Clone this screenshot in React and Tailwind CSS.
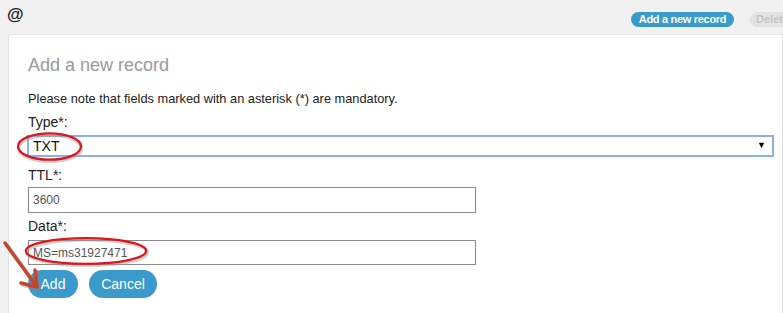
import React from 'react';

const Ellipse = ({ className }) => (
  <svg className={`absolute pointer-events-none ${className}`} viewBox="0 0 100 40" preserveAspectRatio="none">
    <ellipse cx="51" cy="22" rx="47" ry="16" fill="none" stroke="#999" strokeOpacity="0.45" strokeWidth="3.5" vectorEffect="non-scaling-stroke" />
    <ellipse cx="50" cy="20" rx="47" ry="16" fill="none" stroke="#e0141b" strokeWidth="2.3" vectorEffect="non-scaling-stroke" />
  </svg>
);

const Arrow = () => (
  <svg className="absolute left-0 top-[236px] w-[48px] h-[60px] pointer-events-none" viewBox="0 0 48 60">
    <g stroke="#888" strokeOpacity="0.4" strokeWidth="4" strokeLinecap="round" fill="none" transform="translate(2,2)">
      <path d="M5 7 L37 51" />
      <path d="M37 51 L35 34 M37 51 L21 47" />
    </g>
    <g stroke="#c4452b" strokeWidth="3.5" strokeLinecap="round" fill="none">
      <path d="M5 7 L37 51" />
      <path d="M37 51 L35 34 M37 51 L21 47" />
    </g>
  </svg>
);

export default function App() {
  return (
    <div className="w-[783px] h-[313px] overflow-hidden bg-[#f1f1f1] relative" style={{ fontFamily: '"Liberation Sans", Arial, sans-serif' }}>
      {/* top bar */}
      <div className="flex items-start justify-between h-[34px] pl-[7px]">
        <span className="text-[17px] leading-[18px] mt-[6px] text-[#222] font-semibold">@</span>
        <div className="flex items-start pt-[12px] gap-[16px] -mr-[40px]">
          <button className="h-[15px] w-[103px] rounded-full bg-[#3a9acb] text-white text-[11px] font-bold leading-[15px] tracking-[-0.3px]">
            Add a new record
          </button>
          <button className="h-[15px] w-[73px] rounded-full bg-[#e3e3e3] text-[#c4c4c4] text-[11px] font-bold leading-[15px] text-left pl-[6px]">
            Delete
          </button>
        </div>
      </div>

      {/* card */}
      <div className="ml-[8px] bg-white border border-[#e3e3e3] rounded-tl-[3px] pl-[19px] pt-[19px] pb-[40px]">
        <h2 className="text-[18px] leading-[22px] text-[#9a9a9a]">Add a new record</h2>
        <p className="mt-[15px] text-[12.8px] leading-[16px] text-[#222]">
          Please note that fields marked with an asterisk (*) are mandatory.
        </p>

        <div className="mt-[6px] text-[14px] leading-[18px] text-[#222]">Type*:</div>
        <div className="mt-[4px] -ml-[1px] w-[747px] h-[22px] border-2 border-[#8fb0e4] bg-white flex items-center justify-between pl-[4px] pr-[6px]">
          <span className="text-[14px] text-[#111]">TXT</span>
          <span className="text-[9px] text-black">▼</span>
        </div>

        <div className="mt-[9px] text-[14px] leading-[18px] text-[#222]">TTL*:</div>
        <div className="mt-[3px] w-[448px] h-[26px] border border-[#8a8a8a] flex items-center pl-[4px] text-[12px] text-[#555]">
          3600
        </div>

        <div className="mt-[4px] text-[14px] leading-[18px] text-[#222]">Data*:</div>
        <div className="mt-[5px] w-[448px] h-[25px] border border-[#8a8a8a] flex items-center pl-[4px] text-[12px] text-[#555]">
          MS=ms31927471
        </div>

        <div className="mt-[5px] flex gap-[11px]">
          <button className="h-[28px] w-[50px] rounded-full bg-[#3a9acb] text-white text-[14px]">Add</button>
          <button className="h-[28px] w-[68px] rounded-full bg-[#3a9acb] text-white text-[14px]">Cancel</button>
        </div>
      </div>

      <Ellipse className="left-[16px] top-[130px] w-[67px] h-[33px]" />
      <Ellipse className="left-[22px] top-[235px] w-[128px] h-[32px]" />
      <Arrow />
    </div>
  );
}
